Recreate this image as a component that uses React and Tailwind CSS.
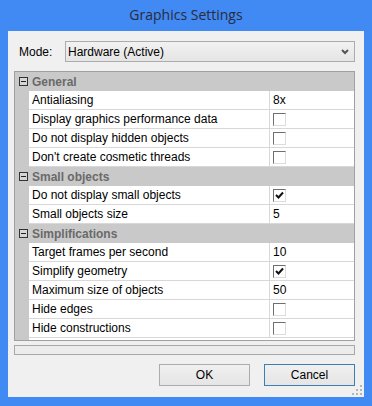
import React from 'react';

const rows = [
  { cat: 'General' },
  { label: 'Antialiasing', value: '8x' },
  { label: 'Display graphics performance data', check: false },
  { label: 'Do not display hidden objects', check: false },
  { label: "Don't create cosmetic threads", check: false },
  { cat: 'Small objects' },
  { label: 'Do not display small objects', check: true },
  { label: 'Small objects size', value: '5' },
  { cat: 'Simplifications' },
  { label: 'Target frames per second', value: '10' },
  { label: 'Simplify geometry', check: true },
  { label: 'Maximum size of objects', value: '50' },
  { label: 'Hide edges', check: false },
  { label: 'Hide constructions', check: false },
];

// sunken checkbox
const CheckBox = ({ checked }) => (
  <div className="w-[13px] h-[13px] bg-white border border-t-[#6f6f6f] border-l-[#6f6f6f] border-r-[#dcdcdc] border-b-[#dcdcdc] flex items-center justify-center">
    {checked && (
      <svg width="9" height="9" viewBox="0 0 9 9">
        <path d="M1 4 L3.5 6.5 L8 1.5" stroke="#111" strokeWidth="2" fill="none" />
      </svg>
    )}
  </div>
);

const MinusBox = () => (
  <div className="w-[9px] h-[9px] border border-[#333] bg-[#d6d6d6] flex items-center justify-center">
    <div className="w-[5px] h-px bg-[#222]" />
  </div>
);

const Row = ({ row }) => {
  if (row.cat) {
    return (
      <div className="flex items-center h-[19px] bg-[#c9c9c9]">
        <div className="w-[14px] flex justify-center pl-[2px]">
          <MinusBox />
        </div>
        <span className="pl-[3px] font-bold text-[#6a6a6a]">{row.cat}</span>
      </div>
    );
  }
  return (
    <div className="flex h-[19px]">
      <div className="w-[14px] bg-[#c9c9c9]" />
      <div className="flex flex-1 bg-white border-b border-[#d8d8d8]">
        <div className="w-[241px] pl-[3px] border-r border-[#d8d8d8] leading-[18px] text-black">{row.label}</div>
        <div className="flex-1 pl-[3px] flex items-center text-black leading-[18px]">
          {row.value ?? <CheckBox checked={row.check} />}
        </div>
      </div>
    </div>
  );
};

const Button = ({ children, focused }) => (
  <button
    className={`w-[91px] h-[22px] border bg-gradient-to-b from-[#f0f0f0] to-[#e5e5e5] text-black ${
      focused ? 'border-[#3c7fb1]' : 'border-[#acacac]'
    }`}
  >
    {children}
  </button>
);

export default function App() {
  return (
    <div className="w-[372px] h-[406px] bg-[#4189f3] flex flex-col font-['Liberation_Sans',Arial,sans-serif] text-[12px]">
      {/* Title bar */}
      <div className="h-[31px] flex items-center justify-center font-['Open_Sans',sans-serif] text-[14px] text-[#2b2b3a] pb-[2px]">
        Graphics Settings
      </div>

      {/* Client area */}
      <div className="relative flex-1 mx-[8px] mb-[9px] bg-[#f0f0f0] flex flex-col pl-[6px] pr-[9px] pt-[10px]">
        <div className="flex items-center h-[21px]">
          <span className="w-[51px] pl-[5px] text-black">Mode:</span>
          <div className="flex-1 h-[21px] border border-[#acacac] bg-gradient-to-b from-[#f2f2f2] to-[#e5e5e5] flex items-center justify-between pl-[2px] pr-[5px] text-black">
            <span>Hardware (Active)</span>
            <svg width="8" height="6" viewBox="0 0 8 6">
              <path d="M1 1 L4 4 L7 1" stroke="#555" strokeWidth="2" fill="none" />
            </svg>
          </div>
        </div>

        {/* Property grid */}
        <div className="mt-[9px] h-[270px] border border-[#a0a0a0] bg-white flex flex-col">
          {rows.map((r, i) => (
            <Row key={i} row={r} />
          ))}
          <div className="flex flex-1">
            <div className="w-[14px] bg-[#c9c9c9]" />
          </div>
        </div>

        {/* Description bar */}
        <div className="mt-[4px] h-[10px] border border-[#a8a8a8] bg-[#ececec]" />

        <div className="mt-[9px] flex justify-end gap-[14px]">
          <Button>OK</Button>
          <Button focused>Cancel</Button>
        </div>

        {/* Resize grip */}
        <svg className="absolute right-[2px] bottom-[2px]" width="10" height="10" viewBox="0 0 10 10" fill="#b5b5b5">
          <rect x="8" y="0" width="2" height="2" />
          <rect x="4" y="4" width="2" height="2" />
          <rect x="8" y="4" width="2" height="2" />
          <rect x="0" y="8" width="2" height="2" />
          <rect x="4" y="8" width="2" height="2" />
          <rect x="8" y="8" width="2" height="2" />
        </svg>
      </div>
    </div>
  );
}
